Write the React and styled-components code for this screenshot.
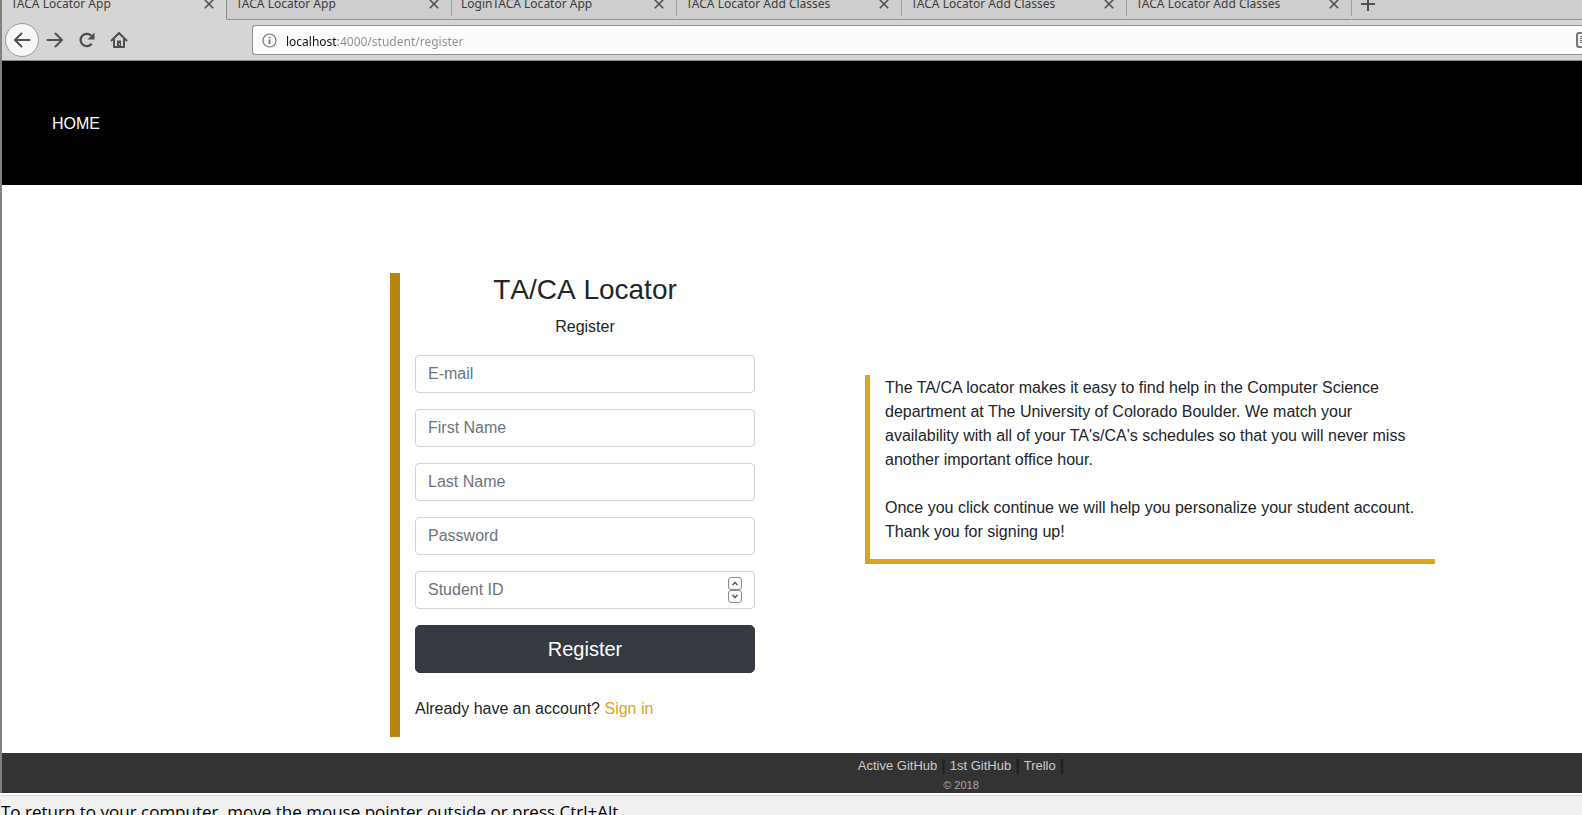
import React, { useRef } from "react";
import styled, { createGlobalStyle } from "styled-components";

const GlobalStyle = createGlobalStyle`
  *, *::before, *::after { box-sizing: border-box; }
  body {
    margin: 0;
    background: #f0f0f0;
    color: #212529;
    font: 16px/24px "Liberation Sans", Arial, sans-serif;
  }
  button, input { font: inherit; margin: 0; }
`;

const uiFont = `"Noto Sans", "Open Sans", sans-serif`;

const Window = styled.div`
  border-left: 2px solid #808080;
  overflow: hidden;
`;

/* Browser chrome */
const TabStrip = styled.div`
  display: flex;
  align-items: flex-end;
  height: 20px;
  overflow: hidden;
  background: #cecece;
`;

const Tab = styled.div`
  flex: 0 0 225px;
  display: flex;
  align-items: center;
  justify-content: space-between;
  height: 32px;
  padding: 0 12px 0 9px;
  background: ${(p) => (p.$active ? "#d5d5d5" : "#cecece")};
  border-bottom: 1px solid ${(p) => (p.$active ? "#d5d5d5" : "#8f8f8f")};
  border-right: 1px solid ${(p) => (p.$active ? "#8f8f8f" : "transparent")};
  background-image: ${(p) =>
    p.$active ? "none" : "linear-gradient(#a0a0a0, #a0a0a0)"};
  background-origin: border-box;
  background-repeat: no-repeat;
  background-position: right top;
  background-size: 1px 28px;
  font: 12px/16px ${uiFont};
  color: #3c3c3c;
  white-space: nowrap;
`;

const IconButton = styled.button`
  display: flex;
  align-items: center;
  justify-content: center;
  width: ${(p) => p.$size}px;
  height: ${(p) => p.$size}px;
  flex: none;
  padding: 0;
  border: ${(p) => (p.$round ? "1px solid #999" : "0")};
  border-radius: 50%;
  background: ${(p) => (p.$round ? "#f7f7f7" : "transparent")};
  color: #505050;
`;

const StripRest = styled.div`
  flex: 1;
  display: flex;
  align-items: center;
  height: 32px;
  padding-left: 8px;
  border-bottom: 1px solid #8f8f8f;
`;

const Toolbar = styled.div`
  display: flex;
  align-items: center;
  height: 41px;
  padding-left: 3px;
  background: #d5d5d5;
  border-bottom: 1px solid #8a8a8a;
`;

const NavButtons = styled.div`
  display: flex;
  align-items: center;
  flex: 0 0 247px;
`;

const AddressBar = styled.div`
  flex: 1;
  display: flex;
  align-items: center;
  gap: 9px;
  height: 30px;
  padding-left: 9px;
  overflow: hidden;
  background: #fcfcfc;
  border: 1px solid #8f8f8f;
  border-right: 0;
  border-radius: 3px 0 0 3px;
  color: #757575;
  svg { flex: none; }
`;

const AddressInput = styled.input`
  flex: 1;
  min-width: 0;
  height: 22px;
  padding: 2px 0 0;
  border: 0;
  outline: 0;
  font: 12px/20px ${uiFont};
  color: transparent;
  background: linear-gradient(to right, #111 51px, #8c8c8c 51px);
  -webkit-background-clip: text;
  background-clip: text;
`;

/* Page */
const Header = styled.header`
  padding: 51px 50px 49px;
  background: #000;
`;

const HomeLink = styled.a`
  display: block;
  width: max-content;
  color: #fff;
  text-decoration: none;
`;

const Main = styled.main`
  display: flex;
  align-items: center;
  gap: 95px;
  padding: 88px 147px 16px 388px;
  background: #fff;
`;

const Form = styled.form`
  flex: 0 0 380px;
  display: flex;
  flex-direction: column;
  gap: 16px;
  padding: 0 15px 16px;
  border-left: 10px solid #b8860b;
`;

const FormHead = styled.div`
  text-align: center;
`;

const Title = styled.h1`
  margin: 0 0 8px;
  font-size: 28px;
  line-height: 34px;
  font-weight: 400;
  font-kerning: none;
`;

const Text = styled.p`
  margin: 0;
`;

const Prompt = styled(Text)`
  padding-top: 8px;
`;

const Field = styled.div`
  position: relative;
`;

const Input = styled.input`
  display: block;
  width: 100%;
  height: 38px;
  padding: 6px 12px;
  border: 1px solid #ced4da;
  border-radius: 4px;
  background: #fff;
  color: #495057;
  appearance: textfield;
  &::placeholder { color: #6c757d; opacity: 1; }
  &::-webkit-inner-spin-button { appearance: none; margin: 0; }
`;

const Stepper = styled.div`
  position: absolute;
  right: 13px;
  top: 6px;
  display: flex;
  flex-direction: column;
`;

const StepButton = styled.button`
  display: flex;
  align-items: center;
  justify-content: center;
  width: 14px;
  height: 13px;
  padding: 0;
  border: 1px solid #8b8b8b;
  border-radius: 3px;
  background: #fafafa;
  color: #555;
`;

const Submit = styled.button`
  height: 48px;
  border: 1px solid #343a40;
  border-radius: 5px;
  background: #343a40;
  color: #fff;
  font-size: 20px;
  line-height: 30px;
`;

const GoldLink = styled.a`
  color: #daa520;
  text-decoration: none;
`;

const Info = styled.section`
  flex: 1;
  display: flex;
  flex-direction: column;
  gap: 24px;
  margin-bottom: 71px;
  padding: 1px 15px 15px;
  border-left: 5px solid #daa520;
  border-bottom: 5px solid #daa520;
`;

const Footer = styled.footer`
  display: flex;
  flex-direction: column;
  align-items: center;
  height: 40px;
  padding: 1px 0 0 338px;
  background: #333;
`;

const FooterLinks = styled.div`
  display: flex;
  gap: 4px;
`;

const FooterLink = styled.a`
  color: #ccc;
  font-size: 13px;
  text-decoration: none;
`;

const Divider = styled.span`
  color: #1c1f23;
  font-weight: 700;
`;

const Copyright = styled.small`
  color: #aaa;
  font-size: 11px;
  line-height: 14px;
`;

const HostNote = styled.div`
  height: 22px;
  padding: 5px 1px 0;
  overflow: hidden;
  border-top: 2px solid #fff;
  box-shadow: inset 0 1px #d8d8d8;
  background: #f0f0f0;
  color: #000;
  font: 17px/24px "Open Sans", "Noto Sans", sans-serif;
  white-space: nowrap;
`;

const TABS = [
  "TACA Locator App",
  "TACA Locator App",
  "LoginTACA Locator App",
  "TACA Locator Add Classes",
  "TACA Locator Add Classes",
  "TACA Locator Add Classes",
];

const FIELDS = [
  { label: "E-mail", type: "email" },
  { label: "First Name", type: "text" },
  { label: "Last Name", type: "text" },
  { label: "Password", type: "password" },
];

const LINKS = ["Active GitHub", "1st GitHub", "Trello"];

function Icon({ w = 18, h = w, sw = 2, children }) {
  return (
    <svg
      width={w}
      height={h}
      viewBox={`0 0 ${w} ${h}`}
      fill="none"
      stroke="currentColor"
      strokeWidth={sw}
      aria-hidden="true"
    >
      {children}
    </svg>
  );
}

function Browser() {
  return (
    <>
      <TabStrip>
        {TABS.map((title, i) => (
          <Tab key={i} $active={i === 0}>
            {title}
            <IconButton $size={10} aria-label="Close tab">
              <Icon w={10} sw={1.6}>
                <path d="M.8.8l8.4 8.4M9.2.8L.8 9.2" />
              </Icon>
            </IconButton>
          </Tab>
        ))}
        <StripRest>
          <IconButton $size={16} aria-label="New tab">
            <Icon w={16}>
              <path d="M8 1v14M1 8h14" />
            </Icon>
          </IconButton>
        </StripRest>
      </TabStrip>
      <Toolbar>
        <NavButtons>
          <IconButton $size={34} $round aria-label="Back">
            <Icon>
              <path
                d="M16.500 9H2.500M8.500 2.500L2 9l6.500 6.500"
                strokeLinejoin="round"
                strokeLinecap="round"
              />
            </Icon>
          </IconButton>
          <IconButton $size={32} aria-label="Forward">
            <Icon>
              <path
                d="M1.500 9h14M9.500 2.500L16 9l-6.500 6.500"
                strokeLinejoin="round"
                strokeLinecap="round"
              />
            </Icon>
          </IconButton>
          <IconButton $size={32} aria-label="Reload">
            <Icon sw={2.3}>
              <path d="M13.700 12.800A6.200 6.200 0 1 1 13.200 4.600" />
              <path d="M16.500 1.500v7H9.500z" fill="currentColor" stroke="none" />
            </Icon>
          </IconButton>
          <IconButton $size={32} aria-label="Home">
            <Icon>
              <path
                d="M1.500 9.500L9 2l7.500 7.500M4 8.500V16h10V8.500"
                strokeLinejoin="round"
                strokeLinecap="round"
              />
              <path d="M7 16V9.500h4V16z" fill="currentColor" stroke="none" />
              <path d="M9 12.500h1v1.500H9z" fill="#d5d5d5" stroke="none" />
            </Icon>
          </IconButton>
        </NavButtons>
        <AddressBar>
          <Icon w={15} sw={1.2}>
            <circle cx="7.500" cy="7.500" r="6.500" />
            <path d="M7.500 6.500V11M7.500 3.700v1.600" strokeWidth="1.800" />
          </Icon>
          <AddressInput
            aria-label="Address"
            defaultValue="localhost:4000/student/register"
          />
          <Icon w={6} h={16}>
            <path d="M6 1H3Q1 1 1 3v10Q1 15 3 15h3" />
            <path d="M4 4.500h2M4 6.500h2M4 8.500h2M4 10.500h2" strokeWidth="1" />
          </Icon>
        </AddressBar>
      </Toolbar>
    </>
  );
}

function RegisterForm() {
  const idRef = useRef(null);
  return (
    <Form onSubmit={(e) => e.preventDefault()}>
      <FormHead>
        <Title>TA/CA Locator</Title>
        <Text>Register</Text>
      </FormHead>
      {FIELDS.map(({ label, type }) => (
        <Input key={label} type={type} placeholder={label} aria-label={label} />
      ))}
      <Field>
        <Input
          ref={idRef}
          type="number"
          placeholder="Student ID"
          aria-label="Student ID"
        />
        <Stepper>
          <StepButton
            type="button"
            aria-label="Increase"
            onClick={() => idRef.current.stepUp()}
          >
            <Icon w={8} h={5} sw={1.4}>
              <path d="M1.500 4L4 1.500 6.500 4" />
            </Icon>
          </StepButton>
          <StepButton
            type="button"
            aria-label="Decrease"
            onClick={() => idRef.current.stepDown()}
          >
            <Icon w={8} h={5} sw={1.4}>
              <path d="M1.500 1L4 3.500 6.500 1" />
            </Icon>
          </StepButton>
        </Stepper>
      </Field>
      <Submit type="submit">Register</Submit>
      <Prompt>
        Already have an account? <GoldLink href="#signin">Sign in</GoldLink>
      </Prompt>
    </Form>
  );
}

export default function App() {
  return (
    <>
      <GlobalStyle />
      <Window>
        <Browser />
        <Header>
          <HomeLink href="#home">HOME</HomeLink>
        </Header>
        <Main>
          <RegisterForm />
          <Info>
            <Text>
              The TA/CA locator makes it easy to find help in the Computer
              Science department at The University of Colorado Boulder. We match
              your availability with all of your TA's/CA's schedules so that you
              will never miss another important office hour.
            </Text>
            <Text>
              Once you click continue we will help you personalize your student
              account. Thank you for signing up!
            </Text>
          </Info>
        </Main>
        <Footer>
          <FooterLinks>
            {LINKS.map((name) => (
              <React.Fragment key={name}>
                <FooterLink href="#link">{name}</FooterLink>
                <Divider>|</Divider>
              </React.Fragment>
            ))}
          </FooterLinks>
          <Copyright>© 2018</Copyright>
        </Footer>
      </Window>
      <HostNote>
        To return to your computer, move the mouse pointer outside or press
        Ctrl+Alt
      </HostNote>
    </>
  );
}
